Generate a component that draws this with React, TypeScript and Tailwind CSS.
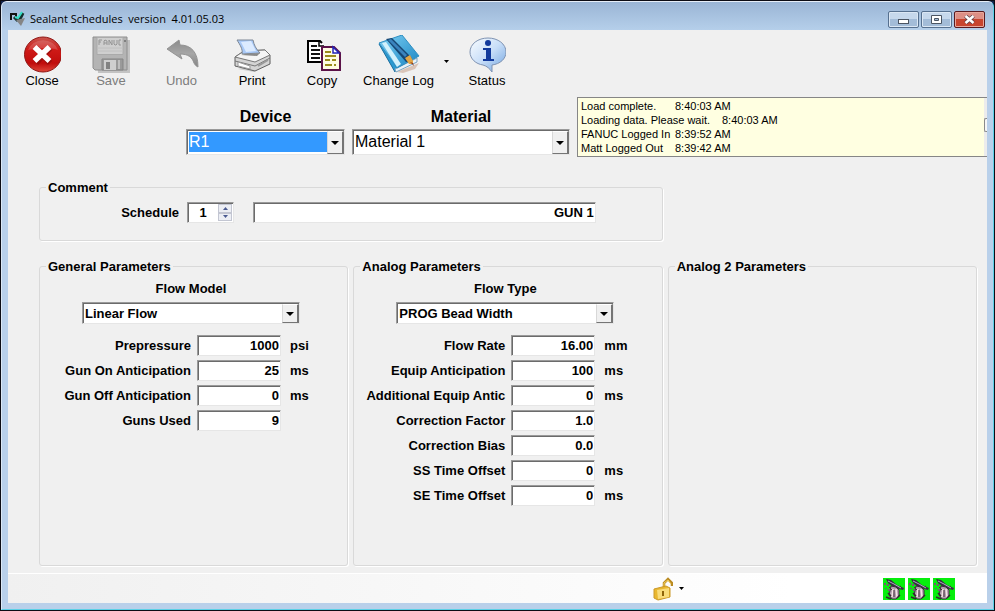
import { useState, type ReactNode } from 'react';

const SUNKEN =
  'border border-t-[#9a9a9a] border-l-[#9a9a9a] border-r-[#e6e6e6] border-b-[#e6e6e6] bg-white shadow-[inset_1px_1px_0_#6b6b6b]';

function AppIcon() {
  return (
    <svg className="mt-1.5 size-[18px]" viewBox="0 0 18 18" aria-hidden="true">
      <path d="M1 4h7M2 3v7M7 4v3" stroke="#111" strokeWidth="2" fill="none" />
      <path d="M5 7l3 3 3-1 3-6" stroke="#16302e" strokeWidth="3" fill="none" />
      <path d="M6 7l3 1 4-6" stroke="#35e0c8" strokeWidth="2" fill="none" />
      <path d="M7 10l9-2-4 8z" fill="#858585" />
    </svg>
  );
}

function CloseIcon() {
  return (
    <svg className="size-[38px]" viewBox="0 0 38 38" aria-hidden="true">
      <defs>
        <linearGradient id="redBall" x1="0" y1="0" x2="0" y2="1">
          <stop offset="0" stopColor="#c9554e" />
          <stop offset="0.35" stopColor="#cf1a17" />
          <stop offset="0.75" stopColor="#c00d0c" />
          <stop offset="1" stopColor="#e0483a" />
        </linearGradient>
      </defs>
      <ellipse cx="20" cy="19.500" rx="18.500" ry="17.500" fill="url(#redBall)" stroke="#8f1715" />
      <path d="M5 15a15.500 13 0 0 1 30 0c-9-3-20-2-30 0z" fill="#fff" opacity="0.16" />
      <path d="M13 13l14 15M27 13L13 28" stroke="#7c0d0b" strokeWidth="6" opacity="0.5" />
      <path d="M11.500 12l15 14M26.500 12l-15 14" stroke="#fff" strokeWidth="5.500" />
    </svg>
  );
}

function SaveIcon() {
  return (
    <svg className="size-[38px]" viewBox="0 0 38 38" aria-hidden="true">
      <path d="M4 5h34v33H6z" fill="#c3c3c3" />
      <path d="M1 2h34v33H3l-2-2z" fill="#b4b4b4" stroke="#8e8e8e" />
      <path d="M5 2.500h26v17H5z" fill="#cfcfcf" stroke="#aaa" />
      <path
        d="M7 10V5h3M7 7h2M12 10V6l1-1 2 1v4M12 8h3M17 10V5l3 5V5M22 5v4l1 1h1l1-1V5M29 5h-2v5h2"
        stroke="#959595"
        fill="none"
      />
      <path d="M5 13h26M5 16h26" stroke="#c0c0c0" />
      <path d="M10 24h21v11H10z" fill="#9a9a9a" stroke="#858585" />
      <path d="M12 25h12v10H12z" fill="#cfcfcf" />
      <path d="M14 27h4v7h-4z" fill="#828282" />
      <path d="M27 25v9" stroke="#bfbfbf" strokeWidth="2" />
      <path d="M32 5h2v2h-2z" fill="#808080" />
    </svg>
  );
}

function UndoIcon() {
  return (
    <svg className="size-[38px]" viewBox="0 0 38 38" aria-hidden="true">
      <defs>
        <linearGradient id="undoGrey" x1="0" y1="0" x2="0" y2="1">
          <stop offset="0" stopColor="#8b8b8b" />
          <stop offset="0.5" stopColor="#a6a6a6" />
          <stop offset="1" stopColor="#858585" />
        </linearGradient>
      </defs>
      <path
        d="M4 14L16 5l1 5c11 0 18 7 18 22-2-1-3-2-4-4-2-6-6-9-14-9l2 5z"
        fill="url(#undoGrey)"
        stroke="#939393"
      />
    </svg>
  );
}

function PrintIcon() {
  return (
    <svg className="size-[38px]" viewBox="0 0 38 38" aria-hidden="true">
      <path d="M5 34l16 3 17-10-3-2z" fill="#b5b5b5" opacity="0.6" />
      <path d="M2 22l9-6 21-1 5 5v9L22 36 2 31z" fill="#d4d4d4" stroke="#5f5f5f" />
      <path d="M2 22l9-6 21-1 5 5-15 7z" fill="#f5f5f5" stroke="#777" />
      <path d="M4 5l16 0c1 5 3 9 7 13l-18 1c1-5-2-9-5-14z" fill="#a9c9f7" stroke="#7d8794" />
      <path d="M8 7l10-1 5 10-10 1z" fill="#dcebff" />
      <path d="M8 20l4-1 15-1-3 3z" fill="#8a8a8a" />
      <path d="M2 26l20 5 15-8" stroke="#777" fill="none" />
      <path d="M5 27l12 4v3L5 31z" fill="#fff" stroke="#999" />
      <path d="M25 31l10-6" stroke="#999" strokeWidth="2" />
    </svg>
  );
}

function CopyIcon() {
  return (
    <svg className="size-[38px]" viewBox="0 0 38 38" aria-hidden="true">
      <path d="M5 6h12l4 4v17H5z" fill="#fff" />
      <path d="M19 8l-2-2H5v21h13" fill="none" stroke="#000" strokeWidth="2" />
      <path d="M16 6v5h5" fill="none" stroke="#000" strokeWidth="1.500" />
      <path d="M8 11h6M8 15h9M8 19h9M8 23h9" stroke="#111" strokeWidth="2" />
      <path d="M19 12h12l6 6v17H19z" fill="#fffbe3" stroke="#5b1248" strokeWidth="2" />
      <path d="M30 12v6h6z" fill="#fff" stroke="#2525b9" strokeWidth="1.500" />
      <path d="M22 17h6M22 21h11M22 25h5M29 25h4M22 30h7M31 30h2" stroke="#9b8b1c" strokeWidth="2" />
    </svg>
  );
}

function ChangeLogIcon() {
  return (
    <svg className="h-[38px] w-[42px]" viewBox="0 0 42 38" aria-hidden="true">
      <defs>
        <linearGradient id="bookBlue" x1="0" y1="0" x2="1" y2="1">
          <stop offset="0" stopColor="#7fd0f4" />
          <stop offset="1" stopColor="#1784c2" />
        </linearGradient>
      </defs>
      <path d="M19 37l22-9-4 6-12 4z" fill="#c9a793" opacity="0.6" />
      <path d="M1 9l3-1 15 25-2 4z" fill="#2a9bd3" stroke="#1c6d9c" />
      <path d="M17 34l22-11v4L18 37z" fill="#e9f2f8" stroke="#7ba4bf" />
      <path d="M1 8L24 0l17 21-22 12z" fill="url(#bookBlue)" stroke="#2f8fc2" />
      <path d="M4 8l4-1 15 22-4 3z" fill="#d2f1fc" />
      <path d="M8 4l6-1 19 19 2 6-7-1z" fill="#164672" />
      <path d="M10 5l3-1 16 16-2 2z" fill="#3a83bd" />
      <path d="M27 23l5-3 3 6v3l-4 0z" fill="#e2a545" />
      <path d="M32 27l3 1 1 3z" fill="#8b3c25" />
    </svg>
  );
}

function StatusIcon() {
  return (
    <svg className="size-[38px]" viewBox="0 0 38 38" aria-hidden="true">
      <defs>
        <linearGradient id="bubble" x1="0" y1="0" x2="1" y2="1">
          <stop offset="0" stopColor="#fafdff" />
          <stop offset="0.5" stopColor="#c8def8" />
          <stop offset="1" stopColor="#6fa3e0" />
        </linearGradient>
      </defs>
      <path
        d="M20 3C10 3 2 9 2 17c0 7 6 12 13 13 4 1 7 4 9 7V30c8-1 14-6 14-13C38 9 30 3 20 3z"
        fill="url(#bubble)"
        stroke="#7f93b2"
      />
      <circle cx="20" cy="8" r="3" fill="#123a9c" />
      <path d="M15 13h8v11h3v2H15v-2h3v-9h-3z" fill="#123a9c" />
    </svg>
  );
}

function LockIcon() {
  return (
    <svg className="h-6 w-5" viewBox="0 0 20 24" aria-hidden="true">
      <path d="M11 10V6l4-4 4 4v3" fill="none" stroke="#b98a22" strokeWidth="2.500" />
      <path d="M11 9V6l4-3 3 4" fill="none" stroke="#f6cf5a" strokeWidth="1" />
      <path d="M1 12l12-3 4 2v9l-12 3-4-2z" fill="#e9b72f" stroke="#cb992a" />
      <path d="M4 13l12-2v9L5 22z" fill="#f9dc7a" />
      <path d="M10 14v5" stroke="#8f6409" strokeWidth="2" />
    </svg>
  );
}

function GunIcon() {
  return (
    <svg className="size-[22px] bg-[#06ee0c]" viewBox="0 0 22 22" role="img" aria-label="Gun ready">
      <path d="M3 1l5 1 6 5 7 3-1 2-4-1-6-2-5-4z" fill="#35303d" />
      <path d="M8 8l5 1 3 3v6l-3 3H9l-3-4 1-4z" fill="#b39fae" stroke="#3a2c3a" />
      <path d="M10 11l-1 8M13 11l1 8" stroke="#f6e3e6" strokeWidth="1.500" />
      <path d="M11 12v7M6 9l3 3M15 10l3-2" stroke="#43303c" />
      <path d="M1 5h2v2H1zM4 6h2v2H4zM2 10h2v1H2zM5 11h2v2H5z" fill="#7b5474" />
      <path d="M5 3l6 3 7 4" stroke="#b2a9c8" fill="none" />
      <path d="M3 19l5 2M5 15l3 3M14 20l3-3" stroke="#35252f" strokeWidth="1.500" />
    </svg>
  );
}

function Caret() {
  return (
    <svg className="h-[3px] w-[5px]" viewBox="0 0 5 3" aria-hidden="true">
      <path d="M0 0h5L2.500 3z" fill="#000" />
    </svg>
  );
}

function ToolButton({ icon, label, width, disabled }: { icon: ReactNode; label: string; width: string; disabled?: boolean }) {
  return (
    <button
      type="button"
      disabled={disabled}
      className={`${width} flex flex-col items-center pt-[5px] text-[13px] leading-4 text-black disabled:text-[#7d7d7d]`}
    >
      {icon}
      {label}
    </button>
  );
}

function Combo({ id, options, size, highlight }: { id: string; options: string[]; size: 'lg' | 'sm'; highlight?: boolean }) {
  const box = size === 'lg' ? 'h-[26px]' : 'h-[22px]';
  const text = size === 'lg' ? 'text-base font-normal' : 'text-[13px] font-bold';
  const fill = highlight ? 'bg-[#3399ff] text-white' : 'bg-white text-black';
  return (
    <div className={`${SUNKEN} ${box} relative flex w-full p-0.5`}>
      <select id={id} className={`${text} ${fill} mr-[15px] min-w-0 flex-1 appearance-none leading-none outline-none`}>
        {options.map((o) => (
          <option key={o}>{o}</option>
        ))}
      </select>
      <span className="pointer-events-none absolute inset-y-0 right-0 mt-px flex w-[17px] items-center justify-center border-t border-r-2 border-b border-l border-t-white border-r-[#757575] border-b-[#757575] border-l-[#d8d8d8] bg-[#f0f0f0]">
        <svg className="h-1 w-2" viewBox="0 0 8 4" aria-hidden="true">
          <path d="M0 0h8L4 4z" fill="#000" />
        </svg>
      </span>
    </div>
  );
}

type Param = { id: string; label: string; value: string; unit?: string };

function ParamRow({ id, label, value, unit }: Param) {
  const [text, setText] = useState(value);
  return (
    <div className="flex h-[21px] items-center">
      <label htmlFor={id} className="w-[145px] text-right whitespace-nowrap">
        {label}
      </label>
      <input
        id={id}
        value={text}
        onChange={(e) => setText(e.target.value)}
        className={`${SUNKEN} ml-1.5 h-[21px] w-[84px] pr-px text-right outline-none`}
      />
      <span className="ml-[9px]">{unit}</span>
    </div>
  );
}

function Group({ title, className, children }: { title: string; className?: string; children?: ReactNode }) {
  return (
    <fieldset
      className={`${className ?? ''} min-w-0 rounded-[3px] border border-[#d9d9d9] px-1.5 shadow-[1px_1px_0_#fff]`}
    >
      <legend className="px-0.5 pt-0.5 leading-4">{title}</legend>
      {children}
    </fieldset>
  );
}

function ModelSection({ id, label, option, rows }: { id: string; label: string; option: string; rows: Param[] }) {
  return (
    <>
      <div className="ml-9 flex w-[218px] flex-col items-center gap-[5px] pt-1.5">
        <label htmlFor={id} className="leading-4">
          {label}
        </label>
        <Combo id={id} options={[option]} size="sm" />
      </div>
      <div className="mt-[11px] flex flex-col gap-1">
        {rows.map((r) => (
          <ParamRow key={r.id} {...r} />
        ))}
      </div>
    </>
  );
}

const GENERAL: Param[] = [
  { id: 'prepressure', label: 'Prepressure', value: '1000', unit: 'psi' },
  { id: 'gun-on', label: 'Gun On Anticipation', value: '25', unit: 'ms' },
  { id: 'gun-off', label: 'Gun Off Anticipation', value: '0', unit: 'ms' },
  { id: 'guns-used', label: 'Guns Used', value: '9' },
];

const ANALOG: Param[] = [
  { id: 'flow-rate', label: 'Flow Rate', value: '16.00', unit: 'mm' },
  { id: 'equip', label: 'Equip Anticipation', value: '100', unit: 'ms' },
  { id: 'add-equip', label: 'Additional Equip Antic', value: '0', unit: 'ms' },
  { id: 'factor', label: 'Correction Factor', value: '1.0' },
  { id: 'bias', label: 'Correction Bias', value: '0.0' },
  { id: 'ss', label: 'SS Time Offset', value: '0', unit: 'ms' },
  { id: 'se', label: 'SE Time Offset', value: '0', unit: 'ms' },
];

const LOG = [
  'Load complete.\t8:40:03 AM',
  'Loading data. Please wait.\t8:40:03 AM',
  'FANUC Logged In\t8:39:52 AM',
  'Matt Logged Out\t8:39:42 AM',
];

const CAPTION =
  'flex h-[17px] w-[31px] items-center justify-center rounded-[2px] border border-[#56708f] bg-linear-to-b from-[#c6d8ec] from-50% to-[#a3bcd8] to-50% shadow-[inset_0_0_0_1px_#dbe7f4]';

function TitleBar() {
  return (
    <header className="-mx-1.5 flex h-7 items-center rounded-t-[5px] bg-linear-to-b from-[#9ab5d5] to-[#b5cfea] pr-2 pl-[7px]">
      <AppIcon />
      <h1 className="ml-[3px] flex-1 pt-1.5 font-['Open_Sans','Noto_Sans',sans-serif] text-[11px] leading-4 whitespace-pre text-black">
        Sealant Schedules  version  4.01.05.03
      </h1>
      <div className="flex gap-0.5 pt-1.5">
        <button type="button" aria-label="Minimize" className={CAPTION}>
          <svg className="mt-1 h-[5px] w-[11px]" viewBox="0 0 11 5" aria-hidden="true">
            <rect x="0.500" y="0.500" width="10" height="4" fill="#fff" stroke="#4b5563" />
          </svg>
        </button>
        <button type="button" aria-label="Maximize" className={CAPTION}>
          <svg className="h-[9px] w-[11px]" viewBox="0 0 11 9" aria-hidden="true">
            <path d="M0.500 0.500h10v8h-10zM3.500 3.500v2h4v-2z" fill="#fff" fillRule="evenodd" stroke="#4b5563" />
          </svg>
        </button>
        <button
          type="button"
          aria-label="Close window"
          className="flex h-[17px] w-[31px] items-center justify-center rounded-[2px] border border-[#5a1a1f] bg-linear-to-b from-[#dd8f85] from-50% to-[#c8452f] to-50% shadow-[inset_0_0_0_1px_#e8a79c]"
        >
          <svg className="h-[9px] w-[11px]" viewBox="0 0 11 9" aria-hidden="true">
            <path d="M1.500 1l8 7M9.500 1l-8 7" stroke="#5b4048" strokeWidth="4" />
            <path d="M1.500 1l8 7M9.500 1l-8 7" stroke="#fff" strokeWidth="2.500" />
          </svg>
        </button>
      </div>
    </header>
  );
}

const SPIN = 'flex flex-1 items-center justify-center border border-[#c3c6d2] bg-[#eceef4]';

export default function App() {
  const [schedule, setSchedule] = useState(1);
  return (
    <div className="flex min-h-screen flex-col border border-[#0c0c14] bg-[#12234a] font-['Liberation_Sans',Arial,sans-serif] text-[13px] text-black">
      <div className="flex flex-1 flex-col rounded-t-md border border-t-[#e6eef8] border-r-[#5bd0e6] border-b-[#5bd0e6] border-l-[#dce8f5] bg-[#b9d0ea] px-1.5 pb-1.5">
        <TitleBar />
        <main className="flex flex-1 flex-col bg-[#f0f0f0]">
          <nav aria-label="Toolbar" className="flex h-[67px] items-start">
            <ToolButton width="w-[68px]" label="Close" icon={<CloseIcon />} />
            <ToolButton width="w-[70px]" label="Save" icon={<SaveIcon />} disabled />
            <ToolButton width="w-[71px]" label="Undo" icon={<UndoIcon />} disabled />
            <ToolButton width="w-[70px]" label="Print" icon={<PrintIcon />} />
            <ToolButton width="w-[70px]" label="Copy" icon={<CopyIcon />} />
            <ToolButton width="w-[83px]" label="Change Log" icon={<ChangeLogIcon />} />
            <button type="button" aria-label="Change log menu" className="flex h-[62px] w-3 items-center justify-center">
              <Caret />
            </button>
            <ToolButton width="w-[70px]" label="Status" icon={<StatusIcon />} />
          </nav>

          <div className="flex h-[60px] items-start">
            <div className="ml-[178px] flex w-[159px] flex-col items-center gap-0.5 pt-2.5">
              <label htmlFor="device" className="text-base leading-5 font-bold">
                Device
              </label>
              <Combo id="device" options={['R1', 'R2']} size="lg" highlight />
            </div>
            <div className="ml-[7px] flex w-[218px] flex-col items-center gap-0.5 pt-2.5">
              <label htmlFor="material" className="text-base leading-5 font-bold">
                Material
              </label>
              <Combo id="material" options={['Material 1', 'Material 2']} size="lg" />
            </div>
            <div className="ml-[7px] flex h-[60px] min-w-0 flex-1 border-y border-l border-[#868686] bg-[#ffffe1]">
              <ul role="log" className="flex-1 py-px pl-[3px] text-[11px] leading-[14px] [tab-size:47px]">
                {LOG.map((line) => (
                  <li key={line} className="whitespace-pre">
                    {line}
                  </li>
                ))}
              </ul>
              <div className="w-[3px] bg-[#ececec] pt-5">
                <div className="h-[14px] rounded-l-[2px] border-y border-l border-[#8a8a8a] bg-[#f6f6f6]" />
              </div>
            </div>
          </div>

          <form className="mt-[21px] grid flex-1 grid-cols-3 grid-rows-[auto_1fr] gap-x-[5px] gap-y-4 pr-2.5 pb-[7px] pl-[31px] font-bold">
            <Group title="Comment" className="col-span-2 h-[63px]">
              <div className="flex items-center pt-1.5">
                <label htmlFor="schedule" className="w-[133px] text-right">
                  Schedule
                </label>
                <div className={`${SUNKEN} ml-2 flex h-[21px] w-[47px] justify-between p-px`}>
                  <input
                    id="schedule"
                    value={schedule}
                    onChange={(e) => setSchedule(Number(e.target.value) || 1)}
                    className="w-[28px] bg-transparent text-center outline-none"
                  />
                  <div className="flex w-[14px] flex-col">
                    <button
                      type="button"
                      aria-label="Next schedule"
                      onClick={() => setSchedule(schedule + 1)}
                      className={SPIN}
                    >
                      <svg className="h-[3px] w-[5px]" viewBox="0 0 5 3" aria-hidden="true">
                        <path d="M0 3h5L2.500 0z" fill="#4a5a91" />
                      </svg>
                    </button>
                    <button
                      type="button"
                      aria-label="Previous schedule"
                      onClick={() => setSchedule(Math.max(1, schedule - 1))}
                      className={SPIN}
                    >
                      <svg className="h-[3px] w-[5px]" viewBox="0 0 5 3" aria-hidden="true">
                        <path d="M0 0h5L2.500 3z" fill="#4a5a91" />
                      </svg>
                    </button>
                  </div>
                </div>
                <input
                  aria-label="Schedule comment"
                  defaultValue="GUN 1"
                  className={`${SUNKEN} mr-[60px] ml-[19px] h-[21px] min-w-0 flex-1 pr-px text-right outline-none`}
                />
              </div>
            </Group>
            <Group title="General Parameters" className="col-start-1 row-start-2">
              <ModelSection id="flow-model" label="Flow Model" option="Linear Flow" rows={GENERAL} />
            </Group>
            <Group title="Analog Parameters" className="row-start-2">
              <ModelSection id="flow-type" label="Flow Type" option="PROG Bead Width" rows={ANALOG} />
            </Group>
            <Group title="Analog 2 Parameters" className="row-start-2" />
          </form>

          <footer className="flex h-[30px] items-center justify-end border-t border-white bg-linear-to-r from-[#f0f0f0] to-white to-80% pr-8">
            <button type="button" aria-label="Unlocked" className="mr-[199px] flex items-center gap-1.5">
              <LockIcon />
              <Caret />
            </button>
            <div className="flex gap-[3px]">
              <GunIcon />
              <GunIcon />
              <GunIcon />
            </div>
          </footer>
        </main>
      </div>
    </div>
  );
}
